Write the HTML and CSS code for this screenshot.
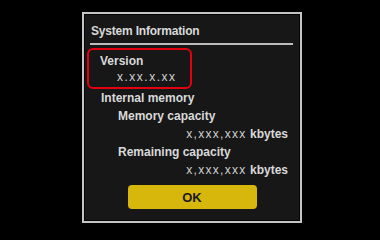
FILE: index.html
```html
<!DOCTYPE html>
<html>
<head>
<meta charset="UTF-8">
<title>System Information</title>
<link rel="stylesheet" href="styles.css">
</head>
<body>
<div class="dialog">
  <div class="title">System Information</div>
  <div class="rule"></div>
  <div class="highlight">
    <div class="label">Version</div>
    <div class="value">x.xx.x.xx</div>
  </div>
  <div class="label">Internal memory</div>
  <div class="label sub">Memory capacity</div>
  <div class="amount"><span class="num">x,xxx,xxx</span> kbytes</div>
  <div class="label sub">Remaining capacity</div>
  <div class="amount"><span class="num">x,xxx,xxx</span> kbytes</div>
  <button type="button" class="ok-btn">OK</button>
</div>
</body>
</html>
```

FILE: styles.css
```css
body {
  margin: 0;
  background-color: #000;
  font-family: "Liberation Sans", Arial, sans-serif;
  font-weight: bold;
  font-size: 12px;
  color: #d9d9d9;
}

.dialog {
  margin: 12px 0 0 82px;
  width: 216px;
  height: 207px;
  border: 2px solid #c4c4c4;
  box-shadow: inset 0 0 0 1px #050505;
  background-color: #171717;
  display: flex;
  flex-direction: column;
}

.title {
  margin: 8px 0 0 7px;
  line-height: 18px;
  letter-spacing: -0.2px;
}

.rule {
  height: 2px;
  margin: 3px 7px 0 6px;
  background-color: #bdbdbd;
}

.highlight {
  margin: 3px 0 0 3px;
  width: 101px;
  padding: 3px 0 2px 11px;
  border: 2px solid #e3000f;
  border-radius: 6px;
  box-sizing: border-box;
  width: 105px;
}

.highlight .label {
  margin-left: 0;
  line-height: 16px;
}

.value {
  line-height: 16px;
  margin-left: 17px;
  font-weight: normal;
  letter-spacing: 1.5px;
  color: #d0d0d0;
}

.label {
  margin-left: 17px;
  line-height: 18px;
}

.label.sub {
  margin-left: 34px;
}

.amount {
  line-height: 18px;
  text-align: right;
  margin-right: 12px;
}

.amount .num {
  font-weight: normal;
  letter-spacing: 1.3px;
  color: #d0d0d0;
}

.ok-btn {
  align-self: center;
  margin-top: 6px;
  width: 129px;
  height: 24px;
  border: none;
  border-radius: 4px;
  background-color: #d8b70d;
  color: #1a1a1a;
  font-family: "Liberation Sans", Arial, sans-serif;
  font-weight: bold;
  font-size: 13px;
  padding: 0;
}
```
